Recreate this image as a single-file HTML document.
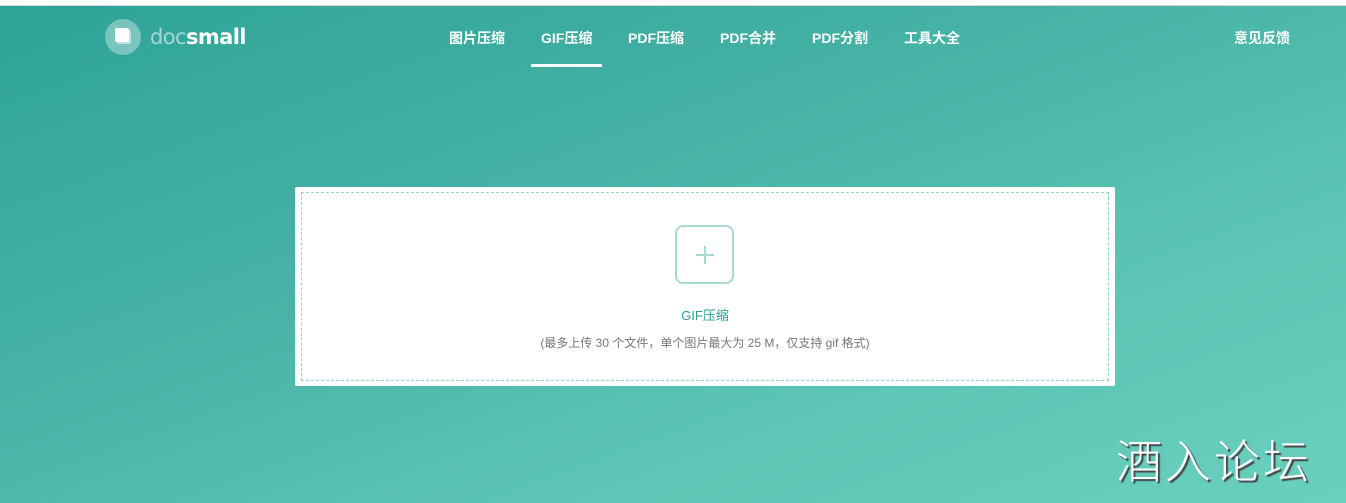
<!DOCTYPE html>
<html><head><meta charset="utf-8"><style>
*{margin:0;padding:0;box-sizing:border-box}
body{width:1346px;height:503px;overflow:hidden;font-family:"Liberation Sans","Noto Sans CJK SC",sans-serif;background:#fff;position:relative}
.top{position:absolute;left:0;top:0;width:1346px;height:6px;background:#fff;border-bottom:1px solid #d8d8d8}
.bg{position:absolute;left:0;top:6px;width:1346px;height:497px;background:linear-gradient(160deg,#2ea398 0%,#47b3a6 40%,#5cc5b5 70%,#6ad0be 100%)}
.logo{position:absolute;left:105px;top:19px;display:flex;align-items:center}
.circ{width:36px;height:36px;border-radius:50%;background:rgba(255,255,255,.35);position:relative}
.circ i{position:absolute;width:14px;height:14px;background:#fff;left:10px;top:9px;border-radius:2px;box-shadow:2px 2px 0 rgba(255,255,255,.5)}
.lt{margin-left:9px;font-size:21px;color:#fff;letter-spacing:-.6px;font-family:"DejaVu Sans","Liberation Sans",sans-serif}
.lt span{color:rgba(255,255,255,.55);font-weight:normal}
.lt b{font-weight:600}
.nav a{position:absolute;top:28px;font-size:14px;font-weight:600;color:#fff;text-decoration:none}
.ul{position:absolute;left:531px;top:64px;width:71px;height:3px;background:#fff}
.card{position:absolute;left:295px;top:187px;width:820px;height:199px;background:#fff;border-radius:2px}
.dash{position:absolute;left:6px;top:5px;right:6px;bottom:5px;border:1px dashed #8fd6cc}
.plus{position:absolute;left:380px;top:38px;width:59px;height:59px;border:2px solid #a8d9d3;border-radius:8px}
.plus:before{content:"";position:absolute;left:19px;top:27px;width:18px;height:1.5px;background:#a8d9d3}
.plus:after{content:"";position:absolute;left:27px;top:19px;width:1.5px;height:18px;background:#a8d9d3}
.t1{position:absolute;left:0;right:0;top:118px;text-align:center;font-size:13px;color:#2aa095}
.t2{position:absolute;left:0;right:0;top:147px;text-align:center;font-size:12px;color:#777}
.wm{position:absolute;left:1116px;top:426px;font-size:46px;color:#fff;font-family:"Noto Sans CJK SC",sans-serif;font-weight:300;text-shadow:2px 2px 1px #444;letter-spacing:3px}
</style></head><body>
<div class="top"></div><div class="bg"></div>
<div class="logo"><div class="circ"><i></i></div><div class="lt"><span>doc</span><b>small</b></div></div>
<div class="nav">
<a style="left:449px">图片压缩</a><a style="left:541px">GIF压缩</a><a style="left:628px">PDF压缩</a><a style="left:720px">PDF合并</a><a style="left:812px">PDF分割</a><a style="left:904px">工具大全</a><a style="left:1234px">意见反馈</a>
</div>
<div class="ul"></div>
<div class="card"><div class="dash"></div><div class="plus"></div>
<div class="t1">GIF压缩</div>
<div class="t2">(最多上传 30 个文件，单个图片最大为 25 M，仅支持 gif 格式)</div></div>
<div class="wm">酒入论坛</div>
</body></html>
